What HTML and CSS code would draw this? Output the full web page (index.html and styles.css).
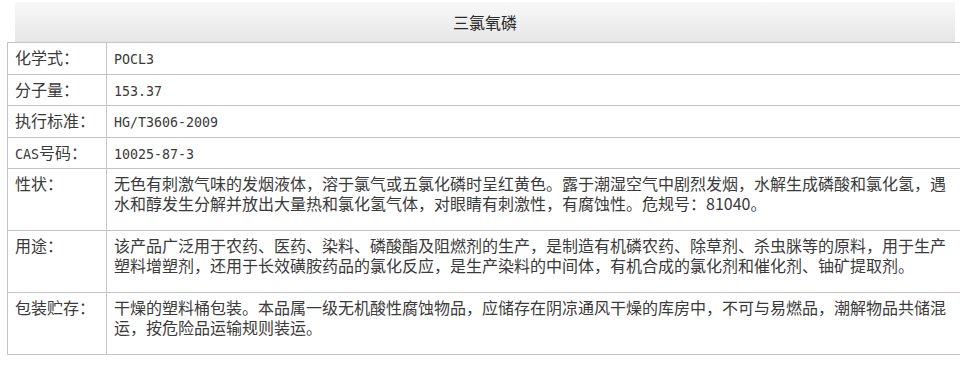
FILE: index.html
```html
<!DOCTYPE html>
<html lang="zh-CN">
<head>
<meta charset="utf-8">
<title>三氯氧磷</title>
<link rel="stylesheet" href="styles.css">
</head>
<body>
<div class="page">
  <div class="title">三氯氧磷</div>
  <div class="spec">
    <div class="row"><div class="label">化学式：</div><div class="value"><span class="lat">POCL3</span></div></div>
    <div class="row"><div class="label">分子量：</div><div class="value"><span class="lat">153.37</span></div></div>
    <div class="row"><div class="label">执行标准：</div><div class="value"><span class="lat">HG/T3606-2009</span></div></div>
    <div class="row"><div class="label"><span class="lat">CAS</span>号码：</div><div class="value"><span class="lat">10025-87-3</span></div></div>
    <div class="row tall"><div class="label">性状：</div><div class="value">无色有刺激气味的发烟液体，溶于氯气或五氯化磷时呈红黄色。露于潮湿空气中剧烈发烟，水解生成磷酸和氯化氢，遇水和醇发生分解并放出大量热和氯化氢气体，对眼睛有刺激性，有腐蚀性。危规号：81040。</div></div>
    <div class="row tall"><div class="label">用途：</div><div class="value">该产品广泛用于农药、医药、染料、磷酸酯及阻燃剂的生产，是制造有机磷农药、除草剂、杀虫脒等的原料，用于生产塑料增塑剂，还用于长效磺胺药品的氯化反应，是生产染料的中间体，有机合成的氯化剂和催化剂、铀矿提取剂。</div></div>
    <div class="row tall"><div class="label">包装贮存：</div><div class="value">干燥的塑料桶包装。本品属一级无机酸性腐蚀物品，应储存在阴凉通风干燥的库房中，不可与易燃品，潮解物品共储混运，按危险品运输规则装运。</div></div>
  </div>
</div>
</body>
</html>
```
FILE: styles.css
```css
html, body {
  margin: 0;
  padding: 0;
  background: #ffffff;
}
.page {
  padding-top: 2px;
  width: 970px;
  font-family: "Noto Sans CJK SC", "Noto Sans", sans-serif;
  color: #3a3a3a;
}
.title {
  margin: 0 15px;
  height: 40px;
  line-height: 40px;
  text-align: center;
  font-size: 16px;
  color: #2a2a2a;
  background: linear-gradient(to bottom, #f8f8f8, #e6e6e6);
}
.spec {
  margin-left: 7px;
  width: 953px;
  border-top: 1px solid #c4c4c4;
}
.row {
  display: grid;
  grid-template-columns: 100px 1fr;
  border-bottom: 1px solid #c4c4c4;
  height: 30.5px;
  font-size: 16px;
  line-height: 20px;
}
.row.tall {
  height: 61px;
}
.label {
  border-left: 1px solid #c4c4c4;
  border-right: 1px solid #c4c4c4;
  padding: 4px 0 0 7px;
}
.value {
  padding: 4px 8px 0 7px;
}
.lat {
  font-family: "DejaVu Sans Mono", "Liberation Mono", monospace;
  font-size: 13.3px;
  line-height: 1;
}
```
